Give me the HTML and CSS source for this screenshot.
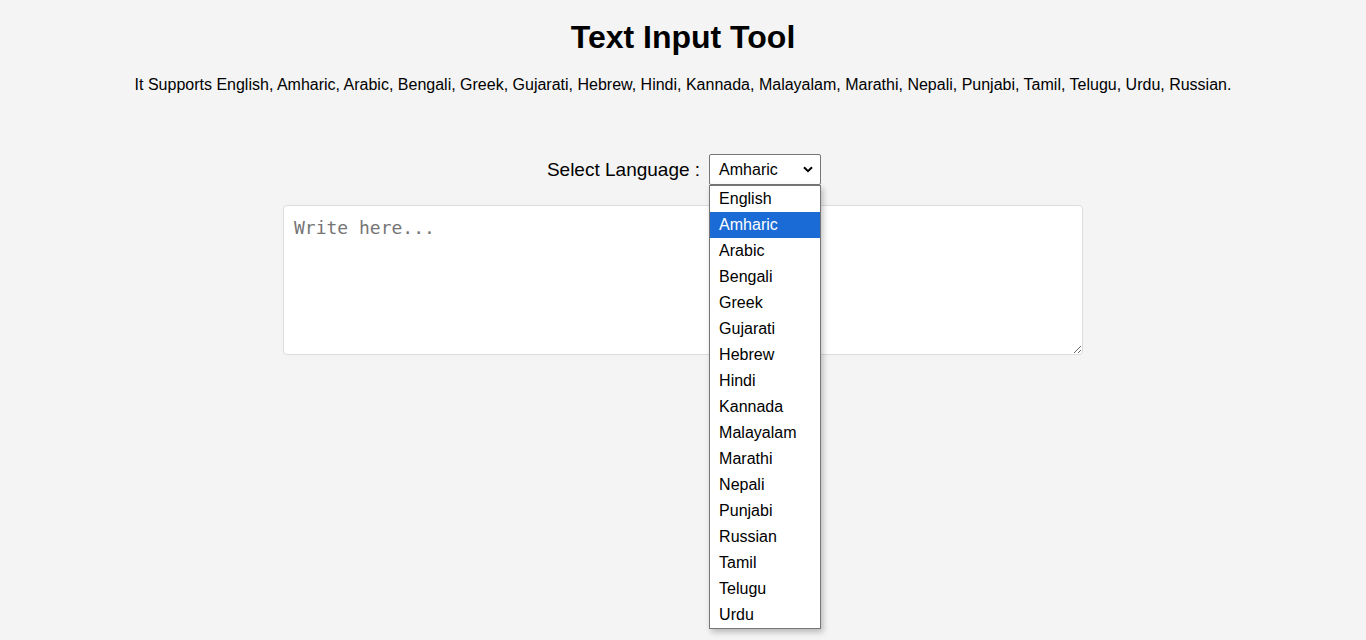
FILE: index.html
```html
<!DOCTYPE html>
<html>
<head>
<meta charset="utf-8">
<link rel="stylesheet" href="styles.css">
</head>
<body>
<div class="page">
  <h1 class="title">Text Input Tool</h1>
  <p class="subtitle">It Supports English, Amharic, Arabic, Bengali, Greek, Gujarati, Hebrew, Hindi, Kannada, Malayalam, Marathi, Nepali, Punjabi, Tamil, Telugu, Urdu, Russian.</p>
  <div class="lang-row">
    <span class="lang-label">Select Language :</span>
    <div class="select-wrap">
      <div class="select-box">
        <span>Amharic</span>
        <svg class="chev" width="10" height="7" viewBox="0 0 10 7"><path d="M1 1.2 L5 5.2 L9 1.2" fill="none" stroke="#000" stroke-width="2"/></svg>
      </div>
      <ul class="options">
        <li>English</li>
        <li class="selected">Amharic</li>
        <li>Arabic</li>
        <li>Bengali</li>
        <li>Greek</li>
        <li>Gujarati</li>
        <li>Hebrew</li>
        <li>Hindi</li>
        <li>Kannada</li>
        <li>Malayalam</li>
        <li>Marathi</li>
        <li>Nepali</li>
        <li>Punjabi</li>
        <li>Russian</li>
        <li>Tamil</li>
        <li>Telugu</li>
        <li>Urdu</li>
      </ul>
    </div>
  </div>
  <textarea class="editor" placeholder="Write here..."></textarea>
</div>
</body>
</html>
```
FILE: styles.css
```css
html, body {
  margin: 0;
  padding: 0;
  background: #f4f4f4;
  font-family: "Liberation Sans", Arial, sans-serif;
  color: #000;
}
.page {
  box-sizing: border-box;
  min-height: 640px;
  display: flex;
  flex-direction: column;
  align-items: center;
  padding-top: 19px;
}
.title {
  margin: 0;
  font-size: 32px;
  font-weight: bold;
  line-height: 37px;
}
.subtitle {
  margin: 20px 0 0;
  font-size: 16px;
  line-height: 18px;
}
.lang-row {
  margin-top: 60px;
  padding-left: 2px;
  display: flex;
  align-items: center;
  gap: 9px;
}
.lang-label {
  font-size: 19px;
}
.select-wrap {
  position: relative;
}
.select-box {
  box-sizing: border-box;
  width: 112px;
  height: 31px;
  border: 1px solid #767676;
  border-radius: 2px;
  background: #fff;
  display: flex;
  align-items: center;
  justify-content: space-between;
  padding: 0 7px 0 9px;
  font-size: 16px;
}
.chev {
  display: block;
}
.options {
  position: absolute;
  top: 31px;
  left: 0;
  width: 112px;
  box-sizing: border-box;
  margin: 0;
  padding: 0;
  list-style: none;
  background: #fff;
  border: 1px solid #767676;
  box-shadow: 2px 3px 6px rgba(0,0,0,0.25);
  z-index: 10;
}
.options li {
  height: 26px;
  line-height: 26px;
  padding-left: 9px;
  font-size: 16px;
}
.options li.selected {
  background: #1a6bd6;
  color: #fff;
}
.editor {
  margin-top: 20px;
  box-sizing: border-box;
  width: 800px;
  height: 150px;
  border: 1px solid #dcdcdc;
  border-radius: 4px;
  background: #fff;
  padding: 11px 10px 10px;
  font-family: "DejaVu Sans Mono", Consolas, monospace;
  font-size: 18px;
  resize: vertical;
  outline: none;
}
.editor::placeholder {
  color: #757575;
}
```
